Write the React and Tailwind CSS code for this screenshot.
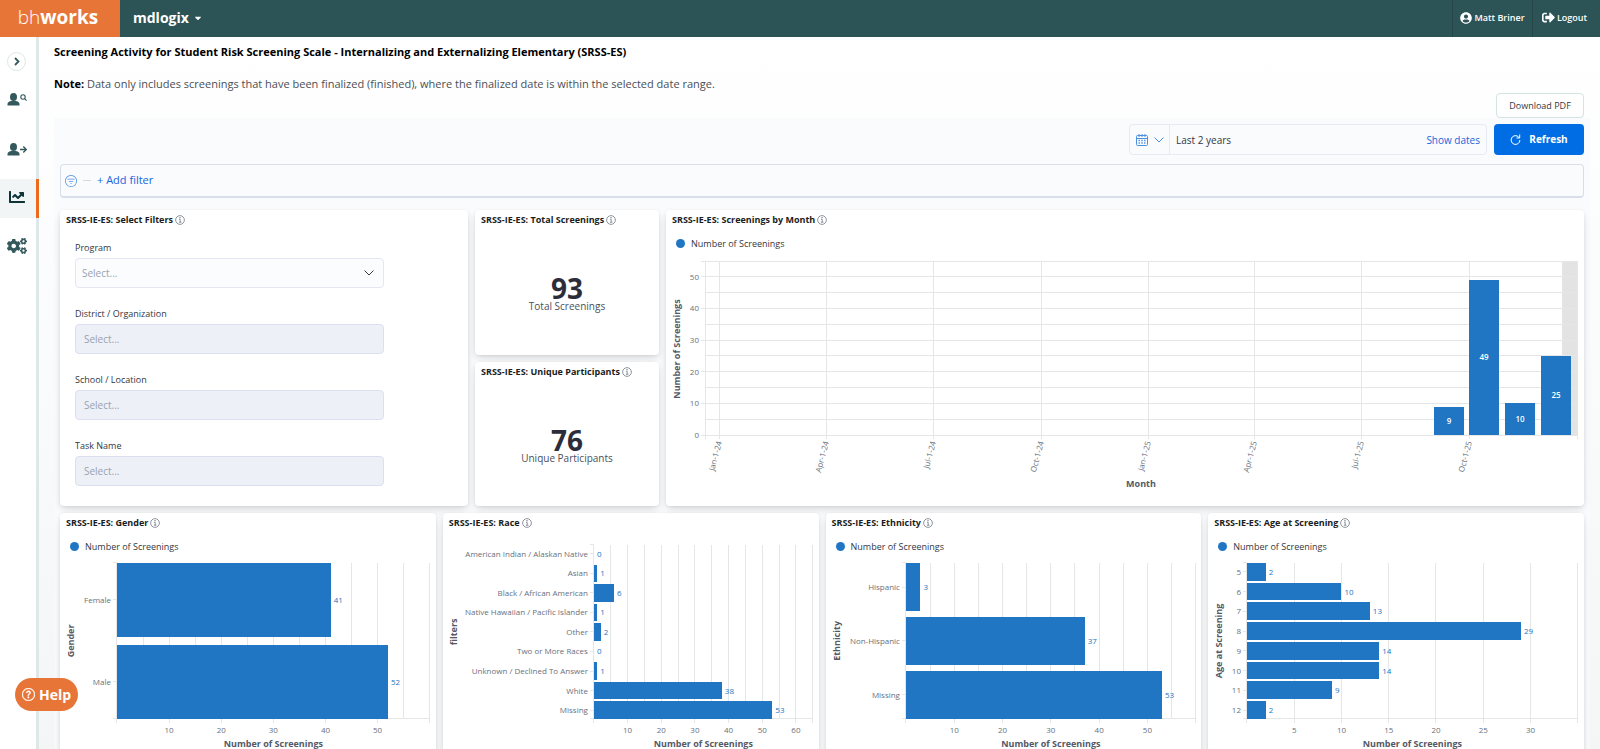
import { FaChartLine, FaCogs, FaSignOutAlt, FaUserCircle, FaCaretDown } from "react-icons/fa";
import { BsFilterCircle, BsQuestionCircle } from "react-icons/bs";

const BLUE = "#2076c2";

const months = [
  { label: "Jan-1-24", x: 53 },
  { label: "Apr-1-24", x: 160 },
  { label: "Jul-1-24", x: 267 },
  { label: "Oct-1-24", x: 375 },
  { label: "Jan-1-25", x: 482 },
  { label: "Apr-1-25", x: 588 },
  { label: "Jul-1-25", x: 695 },
  { label: "Oct-1-25", x: 803 },
];

const monthBars = [
  { x: 768, value: 9 },
  { x: 803, value: 49 },
  { x: 839, value: 10 },
  { x: 875, value: 25 },
];

const gender = [
  { label: "Female", value: 41 },
  { label: "Male", value: 52 },
];

const race = [
  { label: "American Indian / Alaskan Native", value: 0 },
  { label: "Asian", value: 1 },
  { label: "Black / African American", value: 6 },
  { label: "Native Hawaiian / Pacific Islander", value: 1 },
  { label: "Other", value: 2 },
  { label: "Two or More Races", value: 0 },
  { label: "Unknown / Declined To Answer", value: 1 },
  { label: "White", value: 38 },
  { label: "Missing", value: 53 },
];

const ethnicity = [
  { label: "Hispanic", value: 3 },
  { label: "Non-Hispanic", value: 37 },
  { label: "Missing", value: 53 },
];

const age = [
  { label: "5", value: 2 },
  { label: "6", value: 10 },
  { label: "7", value: 13 },
  { label: "8", value: 29 },
  { label: "9", value: 14 },
  { label: "10", value: 14 },
  { label: "11", value: 9 },
  { label: "12", value: 2 },
];

function range(from, to, step) {
  const out = [];
  for (let v = from; v <= to; v += step) out.push(v);
  return out;
}

function InfoIcon() {
  return (
    <svg width="10" height="10" viewBox="0 0 16 16" fill="none" stroke="#69707d" strokeWidth="1.2">
      <circle cx="8" cy="8" r="7" />
      <path d="M6.5 7h1.8v4.5M6.3 11.5h4" />
      <circle cx="8" cy="4.5" r="0.5" fill="#69707d" />
    </svg>
  );
}

function Card({ title, className = "", children }) {
  return (
    <section
      className={`flex flex-col bg-white rounded shadow-[0_1px_4px_-1px_rgba(0,0,0,0.12),0_3px_8px_-1px_rgba(0,0,0,0.07),0_6px_12px_-1px_rgba(0,0,0,0.06)] ${className}`}
    >
      <h2 className="h-5 shrink-0 px-1.5 flex items-center gap-0.5 text-[9px] font-bold text-[#1a1c21] whitespace-nowrap">
        {title}
        <InfoIcon />
      </h2>
      {children}
    </section>
  );
}

function Legend() {
  return (
    <div className="h-[27px] pl-2.5 flex items-center gap-1.5 text-[9px] text-[#343741]">
      <span className="w-[9px] h-[9px] rounded-full bg-[#2076c2]"></span>
      Number of Screenings
    </div>
  );
}

function MonthChart() {
  const top = 4;
  const bottom = 178;
  const y = (v) => bottom - (v / 55) * (bottom - top);

  return (
    <svg viewBox="0 0 918 249" className="w-full h-auto block" shapeRendering="crispEdges">
      <rect x="896" y={top} width="15" height={bottom - top} fill="#e3e3e3" />
      <g stroke="#e4e6e8">
        {range(0, 55, 5).map((v) => (
          <line key={v} x1={v % 10 === 0 || v === 55 ? 35 : 39} x2="911" y1={y(v)} y2={y(v)} />
        ))}
        {months.map((m) => (
          <line key={m.label} x1={m.x} x2={m.x} y1={top} y2={bottom + 4} />
        ))}
        <line x1="39" x2="39" y1={top} y2={bottom + 4} />
        <line x1="911" x2="911" y1={top} y2={bottom + 4} />
      </g>
      <g fontSize="8" fill="#69707d">
        {range(0, 50, 10).map((v) => (
          <text key={v} x="33" y={y(v) + 3} textAnchor="end">{v}</text>
        ))}
        {months.map((m) => (
          <text key={m.label} textAnchor="end" transform={`translate(${m.x + 3} 185) rotate(-75)`}>
            {m.label}
          </text>
        ))}
      </g>
      {monthBars.map((b) => (
        <g key={b.x}>
          <rect x={b.x} y={y(b.value)} width="30" height={bottom - y(b.value)} fill={BLUE} />
          <text x={b.x + 15} y={y(b.value / 2) + 3} textAnchor="middle" fontSize="8" fontWeight="600" fill="#fff">
            {b.value}
          </text>
        </g>
      ))}
      <g fontSize="9" fontWeight="700" fill="#535966" textAnchor="middle">
        <text x="475" y="230">Month</text>
        <text transform="translate(14 92) rotate(-90)">Number of Screenings</text>
      </g>
    </svg>
  );
}

function BarChart({ data, title, left, max, tickStep, top, bottom }) {
  const right = 370;
  const height = bottom + 40;
  const step = (bottom - top) / (data.length - 0.1);
  const x = (v) => left + (v / max) * (right - left);
  const ticks = range(tickStep, max - 1, tickStep);

  return (
    <svg viewBox={`0 0 376 ${height}`} className="w-full h-auto block" shapeRendering="crispEdges">
      <g stroke="#e4e6e8">
        {range(0, max, 5).map((v) => (
          <line key={v} x1={x(v)} x2={x(v)} y1={top} y2={bottom} />
        ))}
        {[0, ...ticks, max].map((v) => (
          <line key={v} x1={x(v)} x2={x(v)} y1={bottom} y2={bottom + 4} />
        ))}
        <line x1={left - 4} x2={left} y1={top} y2={top} />
        <line x1={left - 4} x2={right} y1={bottom} y2={bottom} />
      </g>
      {data.map((d, i) => {
        const mid = top + step * i + step * 0.45;
        return (
          <g key={d.label} fontSize="8">
            <line x1={left - 4} x2={left} y1={mid} y2={mid} stroke="#e4e6e8" />
            <text x={left - 6} y={mid + 3} textAnchor="end" fill="#69707d">{d.label}</text>
            <rect x={left} y={top + step * i} width={x(d.value) - left} height={step * 0.9} fill={BLUE} />
            <text x={x(d.value) + 3} y={mid + 3} fill={BLUE}>{d.value}</text>
          </g>
        );
      })}
      <g fontSize="8" fill="#69707d" textAnchor="middle">
        {ticks.map((v) => (
          <text key={v} x={x(v)} y={bottom + 14}>{v}</text>
        ))}
      </g>
      <g fontSize="9" fontWeight="700" fill="#535966" textAnchor="middle">
        <text x={(left + right) / 2} y={bottom + 28}>Number of Screenings</text>
        <text transform={`translate(14 ${(top + bottom) / 2}) rotate(-90)`}>{title}</text>
      </g>
    </svg>
  );
}

function Metric({ value, label }) {
  return (
    <div className="flex-1 pt-2 flex flex-col items-center justify-center">
      <span className="text-[28px] leading-5 font-bold text-[#2b2e3a]">{value}</span>
      <span className="text-[10px] leading-4 text-[#4a4f5c]">{label}</span>
    </div>
  );
}

function DisabledFilter({ id, label }) {
  return (
    <div className="flex flex-col gap-0.5">
      <label htmlFor={id} className="text-[9px] leading-4 text-[#343741]">{label}</label>
      <input
        id={id}
        disabled
        placeholder="Select..."
        className="h-[30px] px-2 rounded border border-[#dbe0ee] bg-[#edf0f6] text-[10px] placeholder:text-[#98a2b3]"
      />
    </div>
  );
}

function PersonIcon({ children }) {
  return (
    <svg width="20" height="14" viewBox="0 0 20 14" fill="#34595c">
      <ellipse cx="6.5" cy="4" rx="3.5" ry="4" />
      <path d="M0.5 12.5v-1.6c0-1.7 1.8-2.4 4-2.8h4c2.2 .4 4 1.1 4 2.8v1.6z" />
      {children}
    </svg>
  );
}

function Sidebar() {
  return (
    <nav className="w-[39px] shrink-0 border-r-[3px] border-[#dfe8e9] bg-white flex flex-col pt-[15px]">
      <button aria-label="Expand menu" className="ml-[7px] w-[19px] h-[19px] rounded-full border border-[#dbe8e7] flex items-center justify-center">
        <svg width="6" height="9" viewBox="0 0 6 9" fill="none" stroke="#34595c" strokeWidth="1.8">
          <path d="M1 1l3.5 3.5L1 8" />
        </svg>
      </button>
      <a href="#find" aria-label="Find person" className="h-[50px] mt-1 pl-[7px] flex items-center">
        <PersonIcon>
          <g fill="none" stroke="#34595c" strokeWidth="1.1">
            <circle cx="16" cy="4" r="2.2" />
            <path d="M17.6 5.6l2 2" />
          </g>
        </PersonIcon>
      </a>
      <a href="#refer" aria-label="Refer person" className="h-[50px] pl-[7px] flex items-center">
        <PersonIcon>
          <path d="M13 6.5h6M16.3 3.5l3 3-3 3" fill="none" stroke="#34595c" strokeWidth="1.4" />
        </PersonIcon>
      </a>
      <a href="#reports" aria-label="Reports" className="h-[39px] mt-1 -mr-[3px] pl-[9px] pb-1 flex items-center bg-[#f2f5f6] border-r-[3px] border-[#ee6a1c] text-[#0f3438]">
        <FaChartLine size={16} />
      </a>
      <a href="#settings" aria-label="Settings" className="h-14 pl-[7px] flex items-center text-[#34595c]">
        <FaCogs size={20} />
      </a>
    </nav>
  );
}

function Header() {
  return (
    <header className="h-[37px] shrink-0 flex bg-[#2c5356] text-white">
      <a href="#home" className="w-[120px] bg-[#e87538] flex items-center justify-center pr-1 pb-0.5 text-[19px] leading-none">
        <span className="font-light">bh</span>
        <span className="font-bold">works</span>
      </a>
      <button className="pl-[13px] pb-0.5 flex items-center gap-1 text-[14px] font-bold">
        mdlogix
        <FaCaretDown size={10} />
      </button>
      <div className="ml-auto flex text-[9px] font-semibold">
        <a href="#profile" className="w-20 pb-0.5 border-l border-[#244649] flex items-center justify-center gap-0.5 whitespace-nowrap">
          <FaUserCircle size={12} />
          Matt Briner
        </a>
        <a href="#logout" className="w-[68px] pb-0.5 border-l border-[#244649] flex items-center justify-center gap-0.5 pr-1">
          <FaSignOutAlt size={13} />
          Logout
        </a>
      </div>
    </header>
  );
}

function DateBar() {
  return (
    <div className="flex justify-end gap-[7px]">
      <div className="w-[358px] h-[31px] flex rounded border border-[#e6eaf4] text-[10px]">
        <button aria-label="Date quick select" className="w-10 border-r border-[#e6eaf4] flex items-center justify-center gap-1.5">
          <svg width="12" height="12" viewBox="0 0 12 12" fill="none" stroke="#4a90e2">
            <rect x="0.5" y="1.5" width="11" height="10" rx="1" />
            <path d="M0.5 4.5h11M3 0v3M6 0v3M9 0v3" />
            <path d="M2.5 6.5h7M2.5 9h7" strokeDasharray="1.4 1.4" strokeWidth="1.4" />
          </svg>
          <svg width="10" height="6" viewBox="0 0 10 6" fill="none" stroke="#4a90e2">
            <path d="M0.5 0.5L5 5l4.5-4.5" />
          </svg>
        </button>
        <button className="flex-1 px-1.5 pt-px flex items-center justify-between text-[#343741]">
          Last 2 years
          <span className="text-[#1764dc]">Show dates</span>
        </button>
      </div>
      <button className="w-[90px] h-[31px] rounded bg-[#006de4] text-white text-[10px] font-bold flex items-center justify-center gap-2">
        <svg width="11" height="11" viewBox="0 0 11 11" fill="none" stroke="#fff">
          <path d="M9.4 4A4.4 4.4 0 1 0 9.9 6M9.7 0.5V4H6.5" />
        </svg>
        Refresh
      </button>
    </div>
  );
}

export default function App() {
  return (
    <div className="h-screen flex flex-col overflow-hidden font-['Open_Sans','Noto_Sans',sans-serif]">
      <Header />
      <div className="flex-1 min-h-0 flex">
        <Sidebar />
        <main className="flex-1 min-w-0 overflow-y-auto [scrollbar-width:none] bg-linear-to-b from-white to-[#f4f6f6] pl-[15px] pr-2.5">
          <h1 className="pt-1.5 text-[11px] leading-[18px] font-bold text-black">
            Screening Activity for Student Risk Screening Scale - Internalizing and Externalizing Elementary (SRSS-ES)
          </h1>
          <p className="mt-3.5 mb-px text-[11px] leading-[18px] text-[#4a4f55]">
            <b className="text-black">Note:</b> Data only includes screenings that have been finalized (finished), where the finalized date is within the selected date range.
          </p>
          <div className="flex justify-end pr-1.5 -mt-px">
            <button className="w-[88px] h-[25px] rounded-sm border border-[#d3e4e2] bg-white text-[9px] text-[#343741]">
              Download PDF
            </button>
          </div>

          <div className="bg-[#fafbfd] pt-1.5 px-1.5 pb-4">
            <DateBar />
            <div className="mt-[9px] h-[34px] pl-1 rounded-sm border border-b-2 border-[#d8dfeb] flex items-center gap-1.5 text-[11px] text-[#1764dc]">
              <BsFilterCircle size={12} className="text-[#4a90e2]" />
              <span className="w-2 h-px bg-[#d3dae6]"></span>
              <button>+ Add filter</button>
            </div>

            <div className="mt-3 grid grid-cols-[408fr_184fr_918fr] gap-[7px]">
              <Card title="SRSS-IE-ES: Select Filters" className="row-span-2">
                <form className="pt-2.5 pl-[15px] w-[324px] flex flex-col gap-[18px]">
                  <div className="flex flex-col gap-0.5">
                    <label htmlFor="program" className="text-[9px] leading-4 text-[#343741]">Program</label>
                    <div className="relative">
                      <select id="program" className="w-full h-[30px] px-1.5 appearance-none rounded border border-[#e3e7f2] bg-[#fbfcfd] text-[10px] text-[#98a2b3]">
                        <option>Select...</option>
                      </select>
                      <svg className="absolute right-2.5 top-3 pointer-events-none" width="10" height="6" viewBox="0 0 10 6" fill="none" stroke="#343741">
                        <path d="M0.5 0.5L5 5l4.5-4.5" />
                      </svg>
                    </div>
                  </div>
                  <DisabledFilter id="district" label="District / Organization" />
                  <DisabledFilter id="school" label="School / Location" />
                  <DisabledFilter id="task" label="Task Name" />
                </form>
              </Card>
              <Card title="SRSS-IE-ES: Total Screenings">
                <Metric value="93" label="Total Screenings" />
              </Card>
              <Card title="SRSS-IE-ES: Screenings by Month" className="row-span-2">
                <Legend />
                <MonthChart />
              </Card>
              <Card title="SRSS-IE-ES: Unique Participants">
                <Metric value="76" label="Unique Participants" />
              </Card>
            </div>

            <div className="mt-[7px] grid grid-cols-4 gap-[7px]">
              <Card title="SRSS-IE-ES: Gender">
                <Legend />
                <BarChart data={gender} title="Gender" left={57} max={60} tickStep={10} top={3} bottom={159} />
              </Card>
              <Card title="SRSS-IE-ES: Race">
                <BarChart data={race} title="filters" left={151} max={65} tickStep={10} top={12} bottom={186} />
              </Card>
              <Card title="SRSS-IE-ES: Ethnicity">
                <Legend />
                <BarChart data={ethnicity} title="Ethnicity" left={80} max={60} tickStep={10} top={3} bottom={159} />
              </Card>
              <Card title="SRSS-IE-ES: Age at Screening">
                <Legend />
                <BarChart data={age} title="Age at Screening" left={39} max={35} tickStep={5} top={3} bottom={159} />
              </Card>
            </div>
          </div>
        </main>
      </div>
      <button className="fixed left-[15px] bottom-[38px] w-[63px] h-[33px] rounded-full bg-[#e87538] text-white text-[14px] font-bold flex items-center justify-center gap-1">
        <BsQuestionCircle size={13} strokeWidth={0.5} />
        Help
      </button>
    </div>
  );
}
